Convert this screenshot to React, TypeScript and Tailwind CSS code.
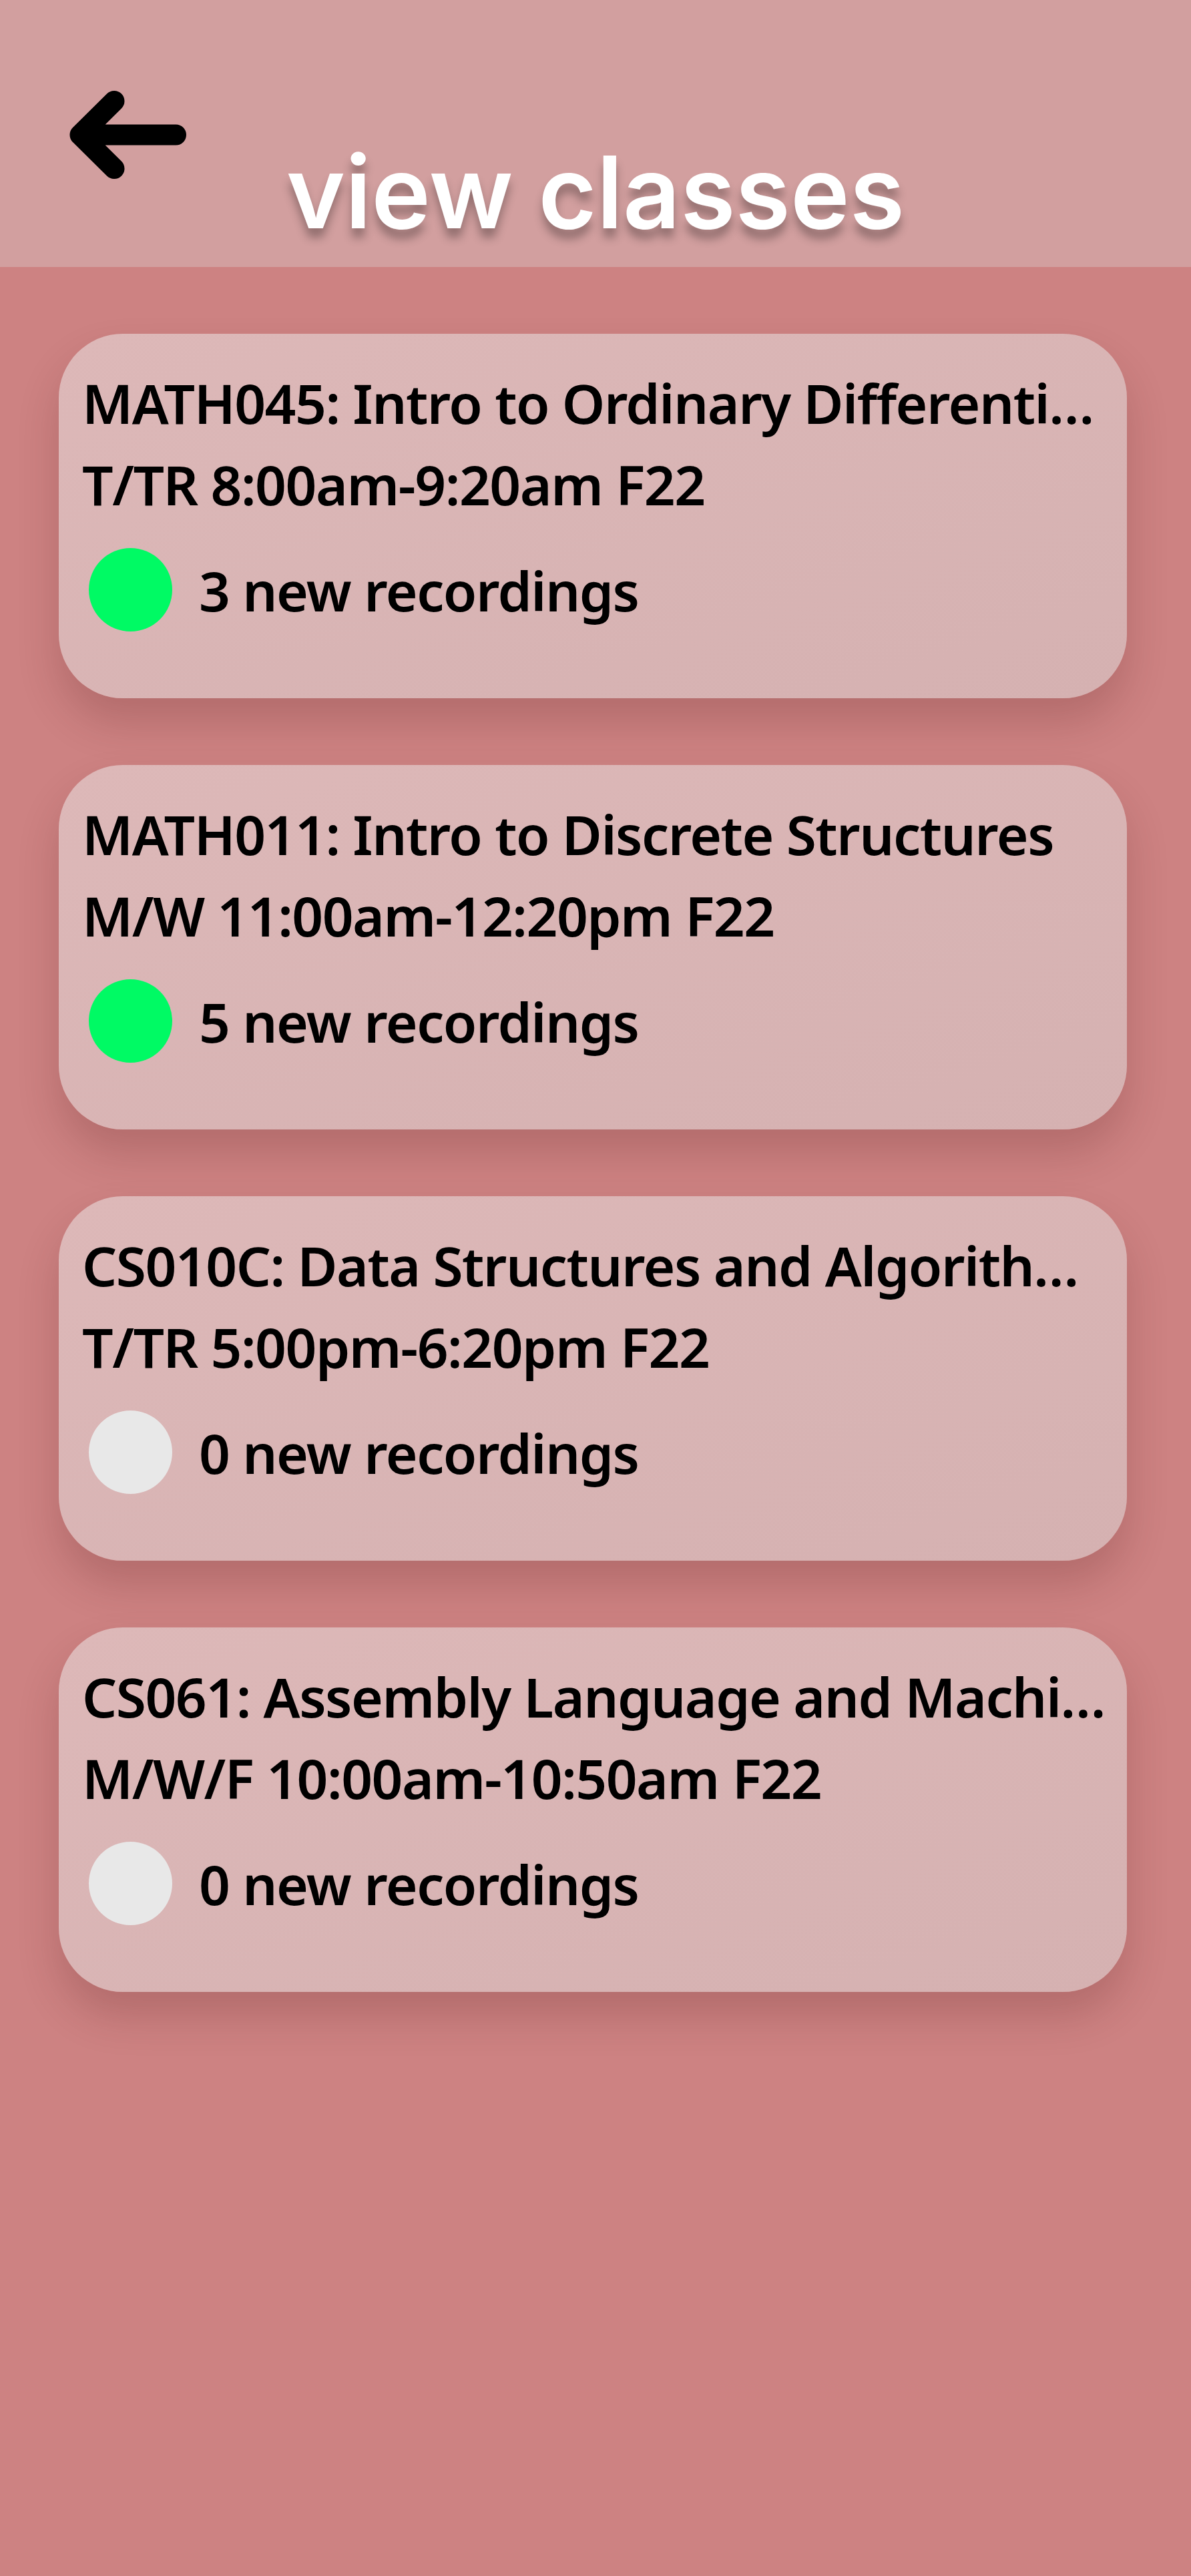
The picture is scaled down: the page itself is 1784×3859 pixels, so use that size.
import { useState } from "react";

interface ClassItem {
  id: string;
  title: string;
  schedule: string;
  newRecordings: number;
}

const classes: ClassItem[] = [
  {
    id: "math045",
    title: "MATH045: Intro to Ordinary Differential Equations",
    schedule: "T/TR 8:00am-9:20am F22",
    newRecordings: 3,
  },
  {
    id: "math011",
    title: "MATH011: Intro to Discrete Structures",
    schedule: "M/W 11:00am-12:20pm F22",
    newRecordings: 5,
  },
  {
    id: "cs010c",
    title: "CS010C: Data Structures and Algorithms",
    schedule: "T/TR 5:00pm-6:20pm F22",
    newRecordings: 0,
  },
  {
    id: "cs061",
    title: "CS061: Assembly Language and Machine Organization",
    schedule: "M/W/F 10:00am-10:50am F22",
    newRecordings: 0,
  },
];

const BackArrow = () => (
  <svg width="175" height="132" viewBox="0 0 175 132" fill="none">
    <path
      d="M67 15.5 L16 66 L67 116.5 M16 66 H159.5"
      stroke="black"
      strokeWidth="31"
      strokeLinecap="round"
      strokeLinejoin="round"
    />
  </svg>
);

const ClassCard = ({ item }: { item: ClassItem }) => {
  return (
    <div className="w-[1600px] rounded-[96px] bg-gradient-to-br from-[#ddb8b8] to-[#d5b1b1] pl-[35px] pr-[30px] pt-[42px] pb-[100px] shadow-[0_36px_60px_rgba(90,30,30,0.22)]">
      <div className="truncate text-[82px] leading-[122px] font-semibold tracking-[-1.5px] text-black">
        {item.title}
      </div>
      <div className="truncate text-[82px] leading-[122px] font-semibold tracking-[-1.5px] text-black">
        {item.schedule}
      </div>
      <div className="mt-[35px] flex items-center gap-[40px] pl-[10px]">
        <div
          className={
            item.newRecordings > 0
              ? "h-[125px] w-[125px] shrink-0 rounded-full bg-[#00fa64]"
              : "h-[125px] w-[125px] shrink-0 rounded-full bg-[#e8e8e8]"
          }
        />
        <div className="text-[82px] leading-[122px] font-semibold tracking-[-1.5px] text-black">
          {item.newRecordings} new recordings
        </div>
      </div>
    </div>
  );
};

const App = () => {
  const [selected, setSelected] = useState<string | null>(null);

  return (
    <div className="min-h-[3859px] w-full bg-[#cd8282] font-['Noto_Sans',sans-serif]">
      <header className="relative h-[400px] bg-[#d29f9f]">
        <button className="absolute left-[104px] top-[136px]">
          <BackArrow />
        </button>
        <h1 className="pt-[213px] text-center text-[150px] leading-[150px] font-semibold text-white font-['Inter',sans-serif] [text-shadow:0_14px_14px_rgba(0,0,0,0.3)]">
          view classes
        </h1>
      </header>

      <main className="flex flex-col gap-[100px] pl-[88px] pt-[100px]">
        {classes.map((item) => (
          <div
            key={item.id}
            onClick={() => setSelected(item.id)}
            className={selected === item.id ? "cursor-pointer" : "cursor-pointer"}
          >
            <ClassCard item={item} />
          </div>
        ))}
      </main>
    </div>
  );
};

export default App;
